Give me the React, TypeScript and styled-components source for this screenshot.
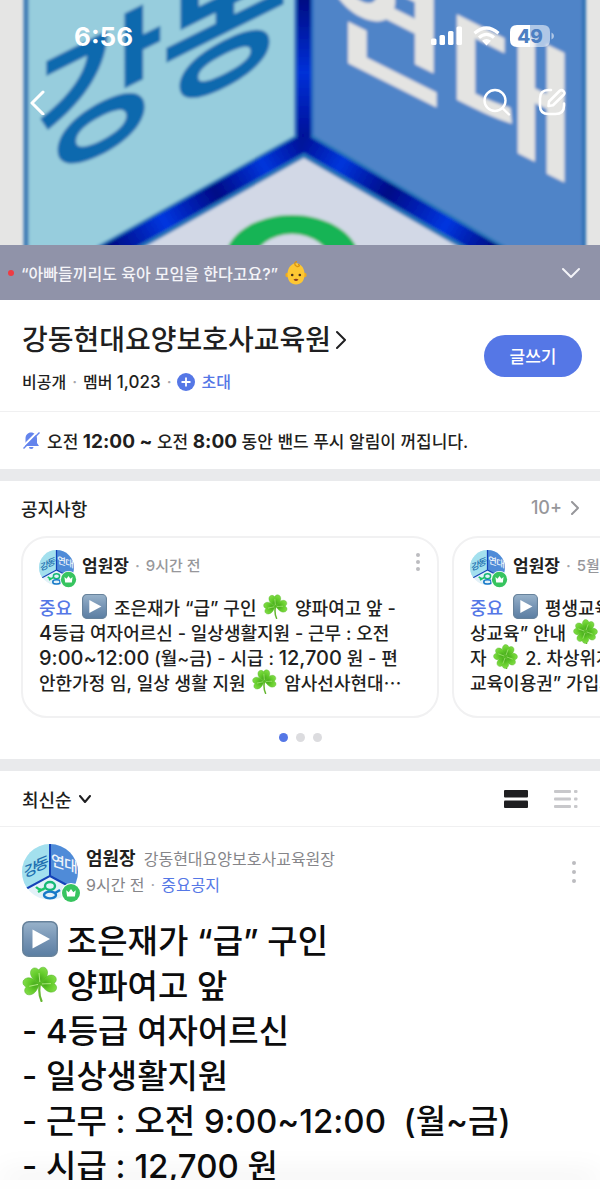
import React from "react";
import styled, { createGlobalStyle } from "styled-components";

const Global = createGlobalStyle`
  *, *::before, *::after { box-sizing: border-box; }
  body {
    margin: 0;
    background: #fff;
    color: #1f1f21;
    font-family: Inter, "Noto Sans CJK KR", sans-serif;
    font-size: 16px;
    font-weight: 500;
    overflow-x: hidden;
  }
  button { font: inherit; color: inherit; border: 0; padding: 0; background: none; cursor: pointer; }
  a { color: inherit; text-decoration: none; }
  h1, h2, p { margin: 0; }
  svg { display: block; flex: none; }
`;

const Page = styled.main`
  background: #fff;
`;

const Hero = styled.header`
  position: relative;
  height: 245px;
  overflow: hidden;
  background: #e5e5e5;
  color: #fff;
`;

const Cover = styled.svg`
  position: absolute;
  inset: 0;
  width: 100%;
  height: 100%;
`;

const StatusBar = styled.div`
  position: relative;
  display: flex;
  align-items: center;
  justify-content: space-between;
  height: 72px;
  padding: 0 46px 0 74px;
`;

const Clock = styled.time`
  font-size: 26px;
  font-weight: 700;
`;

const StatusIcons = styled.div`
  display: flex;
  align-items: center;
  gap: 10px;
`;

const NavBar = styled.nav`
  position: relative;
  display: flex;
  align-items: center;
  height: 60px;
  padding: 0 34px 0 28px;
  gap: 27px;
`;

const IconButton = styled.button<{ $push?: boolean }>`
  display: flex;
  align-items: center;
  margin-right: ${(p) => (p.$push ? "auto" : "0")};
`;

const Promo = styled.a`
  display: flex;
  align-items: center;
  height: 55px;
  padding: 0 20px 0 8px;
  background: #9093a9;
  color: #f4f4f8;
  font-size: 16px;
`;

const RedDot = styled.i`
  width: 6px;
  height: 6px;
  margin-right: 7px;
  border-radius: 50%;
  background: #ee3b43;
`;

const PromoText = styled.span`
  display: flex;
  align-items: center;
  gap: 7px;
  flex: 1;
`;

const BandInfo = styled.section`
  display: flex;
  align-items: center;
  justify-content: space-between;
  height: 111px;
  padding: 0 18px 0 22px;
`;

const BandTitle = styled.h1`
  padding-top: 2px;
  font-size: 28px;
  line-height: 40px;
  font-weight: 500;
`;

const TitleLink = styled.a`
  display: flex;
  align-items: center;
  gap: 5px;
`;

const Meta = styled.p`
  display: flex;
  align-items: center;
  margin-top: 10px;
  font-size: 16px;
  line-height: 24px;
`;

const Num = styled.span<{ $size: number; $bold?: boolean }>`
  font-size: ${(p) => p.$size}px;
  font-weight: ${(p) => (p.$bold ? 700 : 500)};
`;

const Sep = styled.span`
  margin: 0 6px;
  color: #a6a6ab;
`;

const Invite = styled.a`
  display: flex;
  align-items: center;
  gap: 6px;
  color: #5577e6;
`;

const WriteButton = styled.button`
  width: 98px;
  height: 42px;
  border-radius: 21px;
  background: #5577e6;
  color: #fff;
  font-size: 17px;
`;

const MuteRow = styled.section`
  display: flex;
  align-items: center;
  gap: 6px;
  height: 58px;
  padding: 0 22px;
  border-top: 1px solid #f0f0f1;
  font-size: 17px;
`;

const Divider = styled.div`
  height: 12px;
  background: #e9eaec;
`;

const Notices = styled.section`
  height: 278px;
  padding-left: 21px;
  overflow: hidden;
`;

const NoticeHead = styled.div`
  display: flex;
  align-items: center;
  justify-content: space-between;
  height: 55px;
  padding: 0 20px 2px 0;
`;

const NoticeTitle = styled.h2`
  font-size: 18px;
  font-weight: 500;
`;

const More = styled.a`
  display: flex;
  align-items: center;
  gap: 8px;
  color: #97979b;
  font-size: 18px;
`;

const Carousel = styled.div`
  display: flex;
  gap: 13px;
`;

const Card = styled.article`
  flex: 0 0 418px;
  height: 182px;
  padding: 12px 16px;
  border: 2px solid #f1f1f2;
  border-radius: 26px;
`;

const CardHead = styled.div`
  display: flex;
  align-items: flex-start;
  height: 38px;
  margin-bottom: 6px;
  line-height: 32px;
`;

const Author = styled.strong<{ $size: number }>`
  font-size: ${(p) => p.$size}px;
  font-weight: 700;
`;

const Time = styled.span`
  flex: 1;
  color: #97979b;
  font-size: 15px;
`;

const CardMenu = styled(IconButton)`
  height: 24px;
`;

const CardLine = styled.p`
  display: flex;
  align-items: center;
  height: 25px;
  font-size: 18px;
  white-space: pre;

  svg { margin: 0 2px; }
`;

const Important = styled.span`
  color: #5577e6;
`;

const Tag = styled(Important)`
  margin-right: 8px;
`;

const Dots = styled.div`
  display: flex;
  justify-content: center;
  gap: 8px;
  margin-top: 15px;
  padding-right: 21px;
`;

const Dot = styled.i<{ $on?: boolean }>`
  width: 9px;
  height: 9px;
  border-radius: 50%;
  background: ${(p) => (p.$on ? "#5577e6" : "#dcdcdf")};
`;

const SortBar = styled.section`
  display: flex;
  align-items: center;
  gap: 26px;
  height: 56px;
  padding: 0 22px;
  border-bottom: 1px solid #f0f0f1;
`;

const SortButton = styled.button`
  display: flex;
  align-items: center;
  gap: 7px;
  margin-right: auto;
  font-size: 18px;
`;

const Post = styled.article`
  padding: 14px 23px 0 22px;
`;

const PostHead = styled.div`
  display: flex;
  align-items: center;
  height: 62px;
`;

const AuthorBlock = styled.div`
  flex: 1;
  line-height: 26px;
`;

const AuthorRow = styled.p<{ $muted?: boolean }>`
  display: flex;
  align-items: center;
  font-size: 16px;
  font-weight: 400;
  color: ${(p) => (p.$muted ? "#858589" : "#1f1f21")};
`;

const Role = styled.span`
  margin-left: 8px;
  color: #858589;
`;

const PostBody = styled.div`
  padding-top: 13px;
`;

const PostLine = styled.p`
  display: flex;
  align-items: center;
  height: 45px;
  font-size: 33px;
  color: #0c0c0d;
  white-space: pre;
`;

const AvatarBox = styled.span<{ $size: number; $gap: number }>`
  position: relative;
  flex: none;
  width: ${(p) => p.$size}px;
  height: ${(p) => p.$size}px;
  margin-right: ${(p) => p.$gap}px;
`;

const Badge = styled.span<{ $size: number }>`
  position: absolute;
  right: -3px;
  bottom: -3px;
  width: ${(p) => p.$size}px;
  height: ${(p) => p.$size}px;
`;

const BottomSheet = styled.footer`
  position: fixed;
  left: 0;
  right: 0;
  bottom: 0;
  height: 9px;
  background: #fefefe;
  box-shadow: 0 -4px 30px rgba(0, 0, 0, 0.11);
`;

const artFont = { fontFamily: '"Noto Sans CJK KR", sans-serif', fontWeight: 700 };

function CoverArt() {
  return (
    <Cover viewBox="0 0 600 245" preserveAspectRatio="xMidYMid slice" aria-hidden="true">
      <defs>
        <filter id="soft" x="-5%" y="-5%" width="110%" height="110%">
          <feGaussianBlur stdDeviation="1.5" />
        </filter>
        <linearGradient id="beamL" x1="300" y1="140" x2="110" y2="250" gradientUnits="userSpaceOnUse">
          <stop offset="0" stopColor="#00129a" />
          <stop offset=".2" stopColor="#0436dc" />
          <stop offset=".45" stopColor="#000a86" />
          <stop offset=".72" stopColor="#0436e0" />
          <stop offset="1" stopColor="#000a80" />
        </linearGradient>
        <linearGradient id="beamR" x1="304" y1="140" x2="495" y2="250" gradientUnits="userSpaceOnUse">
          <stop offset="0" stopColor="#00129a" />
          <stop offset=".2" stopColor="#0436dc" />
          <stop offset=".45" stopColor="#000a86" />
          <stop offset=".75" stopColor="#0436e0" />
          <stop offset="1" stopColor="#000a80" />
        </linearGradient>
        <linearGradient id="beamV" x1="0" y1="0" x2="0" y2="145" gradientUnits="userSpaceOnUse">
          <stop offset="0" stopColor="#000c84" />
          <stop offset=".5" stopColor="#0530d8" />
          <stop offset="1" stopColor="#000c90" />
        </linearGradient>
      </defs>
      <rect width="600" height="245" fill="#e5e5e4" />
      <g filter="url(#soft)">
        <path d="M27 -10H304V145L112 255H27Z" fill="#97cddd" />
        <path d="M304 -10H584V255H490L304 145Z" fill="#4f84c8" />
        <path d="M304 145L490 256H112Z" fill="#d2d8e6" />
        <path d="M26 -10V255" stroke="#3d7bb5" strokeWidth="5" />
        <path d="M584 -10V255" stroke="#2d70b4" strokeWidth="4" />
        <path d="M304 -10V145" stroke="#2a6cc0" strokeWidth="20" />
        <path d="M306 143L102 257M302 143L500 257" stroke="#2374b8" strokeWidth="24" />
        <path d="M304 -10V146" stroke="url(#beamV)" strokeWidth="14" />
        <path d="M306 142L102 256" stroke="url(#beamL)" strokeWidth="17" />
        <path d="M302 142L500 256" stroke="url(#beamR)" strokeWidth="17" />
        <path
          fillRule="evenodd"
          d="M225 260a67 45 0 0 1 134 0a67 45 0 0 1 -134 0M254 262a38 28 0 0 0 76 0a38 28 0 0 0 -76 0"
          fill="#16b455"
        />
        <g style={artFont} fontSize="140" textAnchor="middle">
          <text fill="#0a69ae" transform="matrix(1 -.5 0 1 100 143)">강</text>
          <text fill="#0a69ae" transform="matrix(1 -.5 0 1 225 75)">동</text>
          <text fill="#e4e4e2" transform="matrix(1 .5 0 1 384 71)">연</text>
          <text fill="#e4e4e2" transform="matrix(1 .5 0 1 512 144)">대</text>
        </g>
      </g>
    </Cover>
  );
}

function Avatar({ size, badge, gap }: { size: number; badge: number; gap: number }) {
  const id = React.useId();
  return (
    <AvatarBox $size={size} $gap={gap}>
      <svg width={size} height={size} viewBox="0 0 56 56" aria-hidden="true">
        <clipPath id={id}>
          <circle cx="28" cy="28" r="28" />
        </clipPath>
        <g clipPath={`url(#${id})`}>
          <rect width="56" height="56" fill="#e2f1f8" />
          <path d="M0 0H28V32L0 46Z" fill="#a3e0ee" />
          <path d="M28 0H56V46L28 32Z" fill="#4f8bd8" />
          <path d="M28 0V32L2 46M28 32L54 46" fill="none" stroke="#1443b8" strokeWidth="2" />
          <g style={{ ...artFont, fontWeight: 500 }} fontSize="15" textAnchor="middle">
            <text fill="#1d6fb0" transform="matrix(1 -.4 0 1 9 31)">강</text>
            <text fill="#1d6fb0" transform="matrix(1 -.4 0 1 20 25)">동</text>
            <text fill="#eef4fa" transform="matrix(1 .3 0 1 36 23)">연</text>
            <text fill="#eef4fa" transform="matrix(1 .3 0 1 49 27)">대</text>
          </g>
          <ellipse cx="28" cy="42" rx="5" ry="4" fill="none" stroke="#16b877" strokeWidth="2.4" />
          <path d="M14 43q5 5 9 1M16 48l7-4" fill="none" stroke="#1fc46a" strokeWidth="2.4" />
          <ellipse cx="28" cy="51" rx="6" ry="3.4" fill="none" stroke="#1779c8" strokeWidth="2.4" />
          <path d="M33 49l5-3" stroke="#1779c8" strokeWidth="2.4" />
        </g>
      </svg>
      <Badge $size={badge}>
        <svg width={badge} height={badge} viewBox="0 0 20 20" aria-hidden="true">
          <circle cx="10" cy="10" r="10" fill="#fff" />
          <circle cx="10" cy="10" r="9" fill="#37c45f" />
          <path d="M5.2 7.2l2.5 2L10 6l2.3 3.2 2.5-2-.9 6.3H6.1z" fill="#fff" />
        </svg>
      </Badge>
    </AvatarBox>
  );
}

function PlayEmoji({ size }: { size: number }) {
  const id = React.useId();
  return (
    <svg width={size} height={size} viewBox="0 0 36 36" role="img" aria-label="▶️">
      <linearGradient id={id} x1="0" y1="0" x2="0" y2="1">
        <stop offset="0" stopColor="#98b2ca" />
        <stop offset=".5" stopColor="#7795b5" />
        <stop offset="1" stopColor="#5b7ea2" />
      </linearGradient>
      <rect x=".8" y=".8" width="34.4" height="34.4" rx="6" fill={`url(#${id})`} stroke="#67829b" strokeWidth="1.6" />
      <path d="M10.5 8.5L28 18L10.5 27.5Z" fill="#fff" />
    </svg>
  );
}

const LEAF = "M0 0C-3 -3 -9 -6 -8.500 -12C-8 -17 -2.500 -18 0 -14C2.500 -18 8 -17 8.500 -12C9 -6 3 -3 0 0Z";

function CloverEmoji({ size, leaves = 3 }: { size: number; leaves?: 3 | 4 }) {
  const id = React.useId();
  const turns = leaves === 3 ? [-5, 88, 258] : [20, 110, 200, 290];
  const cy = 18;
  return (
    <svg width={size} height={size} viewBox="0 0 36 36" role="img" aria-label={leaves === 3 ? "☘️" : "🍀"}>
      <radialGradient id={id} cx=".5" cy=".7" r=".8">
        <stop offset="0" stopColor="#46a81c" />
        <stop offset=".45" stopColor="#63cb2a" />
        <stop offset="1" stopColor="#86de4c" />
      </radialGradient>
      <path d={`M18 ${cy}Q16 27 19.500 35`} fill="none" stroke="#66b732" strokeWidth="2.200" strokeLinecap="round" />
      {turns.map((t) => (
        <g key={t} transform={`translate(18 ${cy}) rotate(${t})`}>
          <path d={LEAF} fill={`url(#${id})`} stroke="#4fb322" strokeWidth=".5" />
          <path d="M0 -2V-11" stroke="#b2ee84" strokeWidth=".9" />
        </g>
      ))}
    </svg>
  );
}

function BabyEmoji() {
  return (
    <svg width="22" height="24" viewBox="0 0 22 24" role="img" aria-label="👶">
      <circle cx="2.500" cy="14" r="2.200" fill="#eda91e" />
      <circle cx="19.500" cy="14" r="2.200" fill="#eda91e" />
      <path d="M11 2C17 3 19.500 8 19.500 13.500C19.500 20 16 23.500 11 23.500S2.500 20 2.500 13.500C2.500 8 5 3 11 2Z" fill="#fdc733" />
      <path d="M12 .5C9 1 9 4 12 5.500C15 6 15 3.500 13 3.500" fill="none" stroke="#d99314" strokeWidth="1.300" />
      <circle cx="7.200" cy="14" r="1.300" fill="#47301a" />
      <circle cx="14.800" cy="14" r="1.300" fill="#47301a" />
      <path d="M8.500 18.500Q11 17.200 13.500 18.500Q11 21.500 8.500 18.500Z" fill="#8a3b22" />
    </svg>
  );
}

function Kebab({ height }: { height: number }) {
  return (
    <svg width="6" height={height} viewBox={`0 0 6 ${height}`} aria-hidden="true" fill="#bcbcc0">
      <circle cx="3" cy="2" r="2" />
      <circle cx="3" cy={height / 2} r="2" />
      <circle cx="3" cy={height - 2} r="2" />
    </svg>
  );
}

function Chevron({ w, h, d, stroke = 2 }: { w: number; h: number; d: string; stroke?: number }) {
  return (
    <svg
      width={w}
      height={h}
      viewBox={`0 0 ${w} ${h}`}
      fill="none"
      stroke="currentColor"
      strokeWidth={stroke}
      strokeLinecap="round"
      strokeLinejoin="round"
      aria-hidden="true"
    >
      <path d={d} />
    </svg>
  );
}

function NoticeCard({ time, children }: { time: string; children: React.ReactNode }) {
  return (
    <Card>
      <CardHead>
        <Avatar size={35} badge={17} gap={8} />
        <Author $size={17}>엄원장</Author>
        <Sep>·</Sep>
        <Time>{time}</Time>
        <CardMenu aria-label="더보기">
          <Kebab height={18} />
        </CardMenu>
      </CardHead>
      {children}
    </Card>
  );
}

export default function App() {
  return (
    <Page>
      <Global />
      <Hero>
        <CoverArt />
        <StatusBar>
          <Clock>6:56</Clock>
          <StatusIcons>
            <svg width="32" height="20" viewBox="0 0 32 20" fill="#fff" aria-hidden="true">
              <rect x="0" y="12.500" width="5.500" height="6.500" rx="1.500" />
              <rect x="8.500" y="9" width="5.500" height="10" rx="1.500" />
              <rect x="17" y="5" width="5.500" height="14" rx="1.500" />
              <rect x="25.500" y="0.500" width="5.500" height="18.500" rx="1.500" />
            </svg>
            <svg width="27" height="20" viewBox="0 0 27 20" aria-hidden="true">
              <g fill="none" stroke="#fff" strokeWidth="3.200">
                <path d="M1.500 7.200Q13.500 -3.200 25.500 7.200" />
                <path d="M6 11.600Q13.500 5 21 11.600" />
              </g>
              <path d="M9 14.800Q13.500 11.200 18 14.800L13.500 19.400Z" fill="#fff" />
            </svg>
            <svg width="44" height="22" viewBox="0 0 44 22" role="img" aria-label="배터리 49%">
              <path d="M7 0H20V22H7Q0 22 0 15V7Q0 0 7 0Z" fill="#fff" />
              <path d="M20 0H33Q40 0 40 7V15Q40 22 33 22H20Z" fill="#fff" opacity=".55" />
              <path d="M41.500 7.500Q44 8.500 44 11T41.500 14.500Z" fill="#fff" opacity=".55" />
              <text x="20" y="17.500" textAnchor="middle" fontFamily="Inter, sans-serif" fontSize="19" fontWeight="800" fill="#4d7fc2">
                49
              </text>
            </svg>
          </StatusIcons>
        </StatusBar>
        <NavBar>
          <IconButton $push aria-label="뒤로">
            <Chevron w={18} h={26} d="M15 3L4 14L15 25" stroke={3} />
          </IconButton>
          <IconButton aria-label="검색">
            <svg width="28" height="28" viewBox="0 0 28 28" fill="none" stroke="#fff" strokeWidth="2.400" strokeLinecap="round">
              <circle cx="12" cy="12.500" r="10.500" />
              <path d="M19.800 20.500L26 26.500" />
            </svg>
          </IconButton>
          <IconButton aria-label="글쓰기 편집">
            <svg width="28" height="28" viewBox="0 0 28 28" fill="none" stroke="#fff" strokeWidth="2.600" strokeLinecap="round" strokeLinejoin="round">
              <path d="M13 2H10.500Q2 2 2 10.500V17.500Q2 26 10.500 26H17.500Q26 26 26 17.500V15.500" />
              <path d="M11 13.500L21.500 3Q23.500 1.300 25.500 3.200T25.500 7L15 17.200L10.500 18Z" />
            </svg>
          </IconButton>
        </NavBar>
      </Hero>

      <Promo href="#promo">
        <RedDot />
        <PromoText>
          “아빠들끼리도 육아 모임을 한다고요?”
          <BabyEmoji />
        </PromoText>
        <Chevron w={18} h={12} d="M1 2L9 10L17 2" />
      </Promo>

      <BandInfo>
        <div>
          <BandTitle>
            <TitleLink href="#band">
              강동현대요양보호사교육원
              <Chevron w={11} h={20} d="M1 2L9 10L1 18" />
            </TitleLink>
          </BandTitle>
          <Meta>
            비공개<Sep>·</Sep>멤버&nbsp;<Num $size={17}>1,023</Num><Sep>·</Sep>
            <Invite href="#invite">
              <svg width="18" height="18" viewBox="0 0 18 18" aria-hidden="true">
                <circle cx="9" cy="9" r="9" fill="#5577e6" />
                <path d="M9 4.500V13.500M4.500 9H13.500" stroke="#fff" strokeWidth="1.800" />
              </svg>
              초대
            </Invite>
          </Meta>
        </div>
        <WriteButton>글쓰기</WriteButton>
      </BandInfo>

      <MuteRow>
        <svg width="19" height="19" viewBox="0 0 19 19" aria-hidden="true">
          <path d="M3.500 13V7.500C3.500 4 6 1.500 9 1.500S15 4 15 7.500V12L17 15H2Z" fill="#6484ec" />
          <path d="M7 16H11.500Q11.500 18 9.200 18T7 16Z" fill="#6484ec" />
          <path d="M0 16.500L15.500 1" stroke="#fff" strokeWidth="2" />
          <path d="M1.500 17.500L17.500 1.500" stroke="#6484ec" strokeWidth="1.400" />
        </svg>
        <span>
          오전 <Num $size={19} $bold>12:00 ~</Num> 오전 <Num $size={19} $bold>8:00</Num> 동안 밴드 푸시 알림이 꺼집니다.
        </span>
      </MuteRow>
      <Divider />

      <Notices>
        <NoticeHead>
          <NoticeTitle>공지사항</NoticeTitle>
          <More href="#notices">
            10+
            <Chevron w={10} h={14} d="M2 1L8 7L2 13" />
          </More>
        </NoticeHead>
        <Carousel>
          <NoticeCard time="9시간 전">
            <CardLine>
              <Tag>중요</Tag><PlayEmoji size={25} />{" 조은재가 “급” 구인 "}<CloverEmoji size={25} />{" 양파여고 앞 -"}
            </CardLine>
            <CardLine>
              <span><Num $size={20}>4</Num>등급 여자어르신 - 일상생활지원 - 근무 : 오전</span>
            </CardLine>
            <CardLine>
              <span><Num $size={20}>9:00~12:00</Num> (월~금) - 시급 : <Num $size={20}>12,700</Num> 원 - 편</span>
            </CardLine>
            <CardLine>{"안한가정 임, 일상 생활 지원 "}<CloverEmoji size={25} />{" 암사선사현대⋯"}</CardLine>
          </NoticeCard>
          <NoticeCard time="5월 23일">
            <CardLine>
              <Tag>중요</Tag><PlayEmoji size={25} />{" 평생교육 “무"}
            </CardLine>
            <CardLine>{"상교육” 안내 "}<CloverEmoji size={25} leaves={4} />{" 1. 대상"}</CardLine>
            <CardLine>{"자 "}<CloverEmoji size={25} leaves={4} />{" 2. 차상위계층"}</CardLine>
            <CardLine>교육이용권” 가입자</CardLine>
          </NoticeCard>
        </Carousel>
        <Dots>
          <Dot $on />
          <Dot />
          <Dot />
        </Dots>
      </Notices>
      <Divider />

      <SortBar>
        <SortButton>
          최신순
          <Chevron w={12} h={8} d="M1 1L6 7L11 1" />
        </SortButton>
        <IconButton aria-label="카드 보기">
          <svg width="24" height="18" viewBox="0 0 24 18" fill="#1f1f21">
            <rect width="24" height="7.500" rx="1" />
            <rect y="10.500" width="24" height="7.500" rx="1" />
          </svg>
        </IconButton>
        <IconButton aria-label="목록 보기">
          <svg width="24" height="18" viewBox="0 0 24 18" fill="#c8c8cb">
            {[0, 7.5, 15].map((y) => (
              <g key={y}>
                <rect y={y} width="17" height="3" rx="1" />
                <rect x="20" y={y} width="3.500" height="3" rx="1" />
              </g>
            ))}
          </svg>
        </IconButton>
      </SortBar>

      <Post>
        <PostHead>
          <Avatar size={56} badge={20} gap={8} />
          <AuthorBlock>
            <AuthorRow>
              <Author $size={18}>엄원장</Author>
              <Role>강동현대요양보호사교육원장</Role>
            </AuthorRow>
            <AuthorRow $muted>
              9시간 전<Sep>·</Sep>
              <Important>중요공지</Important>
            </AuthorRow>
          </AuthorBlock>
          <IconButton aria-label="더보기">
            <Kebab height={22} />
          </IconButton>
        </PostHead>
        <PostBody>
          <PostLine><PlayEmoji size={36} />{" 조은재가 “급” 구인"}</PostLine>
          <PostLine><CloverEmoji size={36} />{" 양파여고 앞"}</PostLine>
          <PostLine>- 4등급 여자어르신</PostLine>
          <PostLine>- 일상생활지원</PostLine>
          <PostLine>{"- 근무 : 오전 9:00~12:00  (월~금)"}</PostLine>
          <PostLine>- 시급 : 12,700 원</PostLine>
        </PostBody>
      </Post>
      <BottomSheet />
    </Page>
  );
}
